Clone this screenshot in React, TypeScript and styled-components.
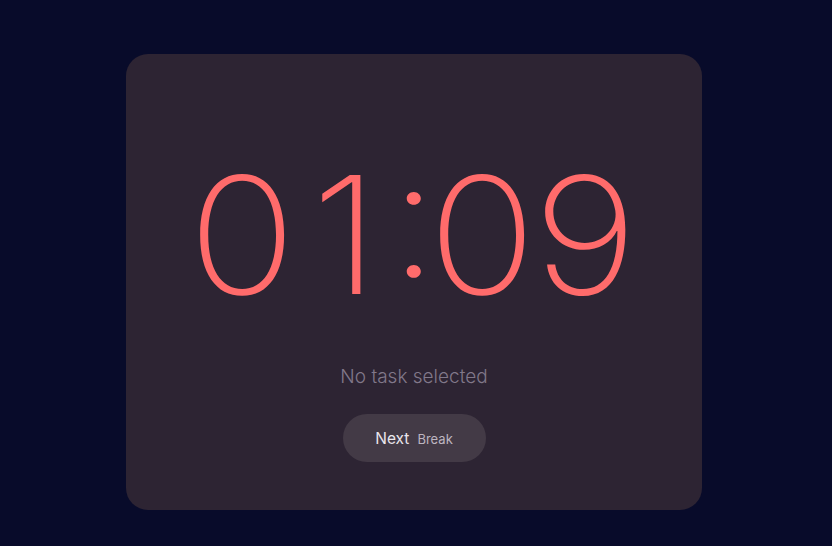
import React from 'react';
import styled, { createGlobalStyle } from 'styled-components';

const GlobalStyle = createGlobalStyle`
  html, body {
    margin: 0;
    padding: 0;
    background: #080b2a;
    font-family: Inter, "Noto Sans", sans-serif;
  }
`;

const Page = styled.div`
  width: 832px;
  height: 546px;
  display: flex;
  justify-content: center;
  padding: 54px 4px 0 0;
  box-sizing: border-box;
`;

const Card = styled.div`
  width: 576px;
  height: 456px;
  background: #2d2433;
  border-radius: 22px;
  display: flex;
  flex-direction: column;
  align-items: center;
  box-sizing: border-box;
  padding-top: 99px;
`;

const Time = styled.div`
  display: flex;
  color: #ff6b6b;
  font-size: 163px;
  font-weight: 200;
  line-height: 163px;
  transform: scaleX(1.1);
`;

// fixed-width cells so digits sit on an even grid, like tabular figures;
// the negative tracking is balanced by padding so each glyph stays centred
const Cell = styled.span<{ $colon?: boolean }>`
  display: flex;
  justify-content: center;
  box-sizing: border-box;
  width: ${p => (p.$colon ? '31px' : '93.6px')};
  padding-right: ${p => (p.$colon ? '16px' : '12px')};
  letter-spacing: ${p => (p.$colon ? '-16px' : '-12px')};
  font-feature-settings: ${p => (p.$colon ? '"case" 1' : 'normal')};
`;

const TaskLabel = styled.div`
  margin-top: 49px;
  color: #81788a;
  font-size: 19px;
  font-weight: 300;
`;

const NextButton = styled.button`
  margin-top: 26px;
  width: 143px;
  height: 48px;
  border: none;
  border-radius: 24px;
  background: #433a46;
  display: flex;
  align-items: baseline;
  justify-content: center;
  gap: 8px;
  padding: 0;
  padding-top: 15px;
  box-sizing: border-box;
  font-family: Inter, "Noto Sans", sans-serif;
  cursor: pointer;
`;

const ButtonMain = styled.span`
  color: #eae6ec;
  font-size: 15.5px;
  font-weight: 400;
`;

const ButtonSub = styled.span`
  color: #bdb5c0;
  font-size: 13px;
  font-weight: 400;
`;

const time = '01:09';

export default function App() {
  return (
    <>
      <GlobalStyle />
      <Page>
        <Card>
          <Time>
            {time.split('').map((ch, i) => (
              <Cell key={i} $colon={ch === ':'}>
                {ch}
              </Cell>
            ))}
          </Time>
          <TaskLabel>No task selected</TaskLabel>
          <NextButton>
            <ButtonMain>Next</ButtonMain>
            <ButtonSub>Break</ButtonSub>
          </NextButton>
        </Card>
      </Page>
    </>
  );
}
